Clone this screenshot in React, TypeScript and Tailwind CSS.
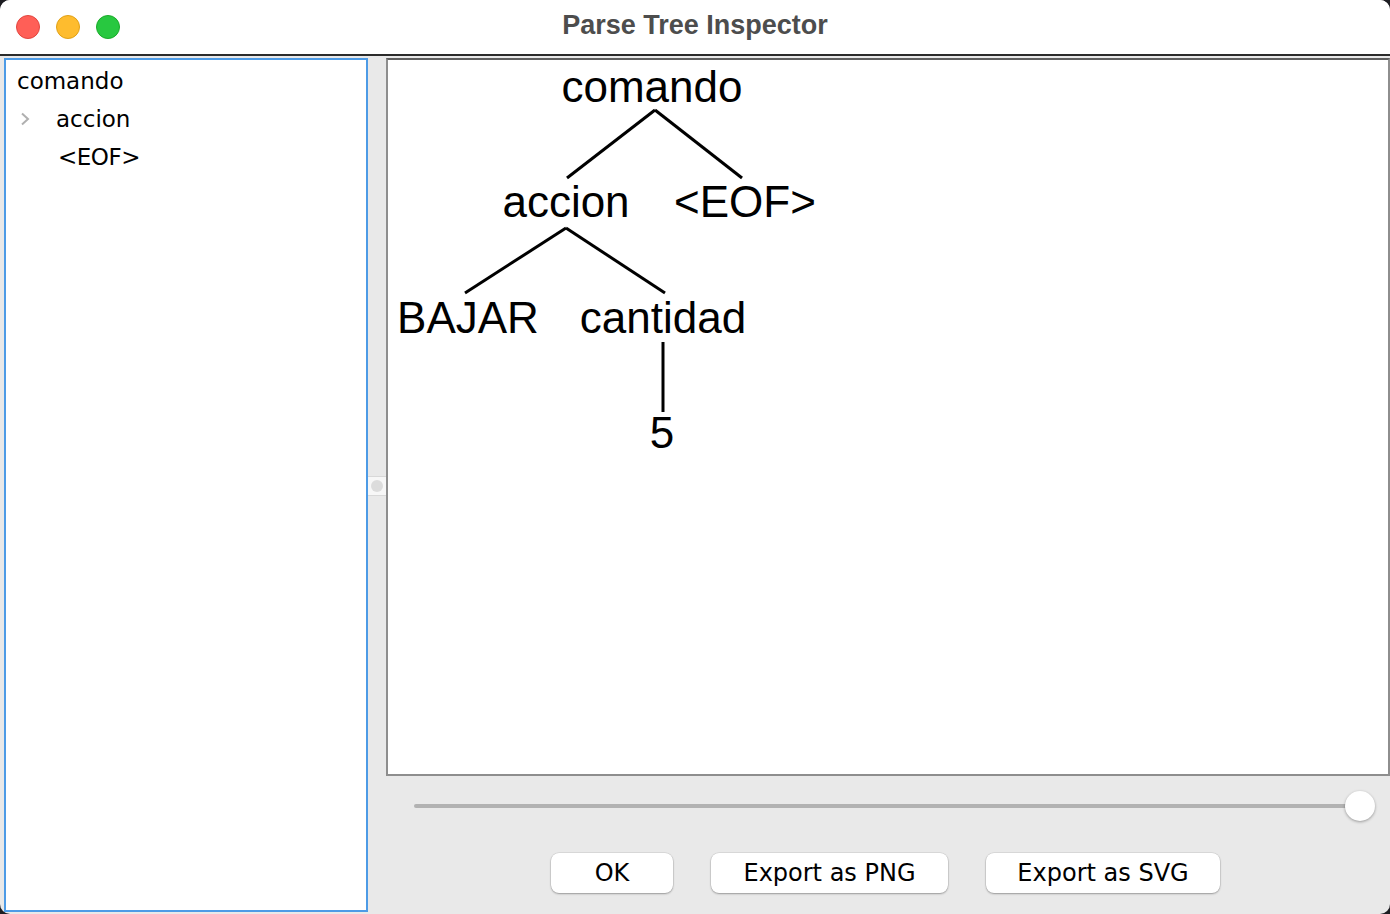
import { useState } from 'react';

const treeFont = '"Liberation Sans", Arial, sans-serif';
const uiFont = '"DejaVu Sans", "Lucida Grande", sans-serif';

function TrafficLights() {
  return (
    <div className="flex items-center gap-[16px] pl-[16px]">
      <span className="w-[24px] h-[24px] rounded-full bg-[#ff5f57] border border-[#e2463f]" />
      <span className="w-[24px] h-[24px] rounded-full bg-[#febc2e] border border-[#e1a116]" />
      <span className="w-[24px] h-[24px] rounded-full bg-[#28c840] border border-[#1aab29]" />
    </div>
  );
}

function TreeList() {
  return (
    <div
      className="w-[364px] h-[854px] border-2 border-[#4d9be6] bg-white text-[23px] text-black"
      style={{ fontFamily: uiFont }}
    >
      <div className="pt-[2px]">
        <div className="h-[38px] flex items-center pl-[11px]">comando</div>
        <div className="h-[38px] flex items-center">
          <svg width="10" height="14" viewBox="0 0 10 14" className="ml-[14px] mr-[26px]">
            <path d="M2 1.5 L8 7 L2 12.5" fill="none" stroke="#b0b0b0" strokeWidth="2" />
          </svg>
          <span>accion</span>
        </div>
        <div className="h-[38px] flex items-center pl-[52px] tracking-[-0.5px]">&lt;EOF&gt;</div>
      </div>
    </div>
  );
}

function ParseTree() {
  const nodes = [
    { label: 'comando', x: 264, y: 42 },
    { label: 'accion', x: 178, y: 157 },
    { label: '<EOF>', x: 357, y: 157 },
    { label: 'BAJAR', x: 80, y: 273 },
    { label: 'cantidad', x: 275, y: 273 },
    { label: '5', x: 274, y: 388 },
  ];
  const edges = [
    [267, 50, 179, 118],
    [267, 50, 354, 118],
    [178, 168, 77, 233],
    [178, 168, 277, 233],
    [275, 282, 275, 352],
  ];

  return (
    <svg width="1000" height="714" className="block">
      {edges.map(([x1, y1, x2, y2], i) => (
        <line key={i} x1={x1} y1={y1} x2={x2} y2={y2} stroke="#000" strokeWidth="3" />
      ))}
      {nodes.map((n) => (
        <text
          key={n.label}
          x={n.x}
          y={n.y}
          textAnchor="middle"
          fontSize="44"
          fill="#000"
          style={{ fontFamily: treeFont }}
        >
          {n.label}
        </text>
      ))}
    </svg>
  );
}

function Button({ label, width }: { label: string; width: string }) {
  return (
    <button
      className={`${width} h-[40px] rounded-[8px] bg-white text-[24px] text-black shadow-[0_1px_2px_rgba(0,0,0,0.3),0_0_0_0.5px_rgba(0,0,0,0.12)] flex items-center justify-center`}
      style={{ fontFamily: uiFont }}
    >
      {label}
    </button>
  );
}

export default function App() {
  const [zoom] = useState(100);

  return (
    <div className="w-[1390px] h-[914px] bg-[#1d1d22]">
      <div className="w-full h-full rounded-[10px] overflow-hidden flex flex-col bg-[#e9e9e9]">
        <div className="h-[56px] bg-white border-b-2 border-[#2b2b2b] grid grid-cols-[1fr_auto_1fr] items-center">
          <TrafficLights />
          <div
            className="text-[27px] font-bold text-[#4d4d4d] pb-[4px]"
            style={{ fontFamily: '"Liberation Sans", Arial, sans-serif' }}
          >
            Parse Tree Inspector
          </div>
          <div />
        </div>

        <div className="flex-1 flex pt-[2px] pl-[4px]">
          <TreeList />

          <div className="w-[18px] flex items-center justify-center">
            <div className="w-[18px] h-[20px] bg-[#f7f7f7] border-y border-[#d8d8d8] flex items-center justify-center">
              <span className="w-[12px] h-[12px] rounded-full bg-[#dcdcdc]" />
            </div>
          </div>

          <div className="flex-1 flex flex-col">
            <div className="h-[718px] border-2 border-[#8e8e8e] border-t-[#5f5f5f] bg-white overflow-hidden">
              <ParseTree />
            </div>

            <div className="h-[30px] mt-[15px] flex items-center pl-[28px] pr-[15px]">
              <div className="flex-1 h-[4px] bg-[#b2b2b2] rounded-full" />
              <div
                className="w-[30px] h-[30px] -ml-[2px] rounded-full bg-white shadow-[0_1px_3px_rgba(0,0,0,0.35)]"
                title={`${zoom}`}
              />
            </div>

            <div className="mt-[32px] flex justify-center gap-[38px] pr-[5px]">
              <Button label="OK" width="w-[122px]" />
              <Button label="Export as PNG" width="w-[237px]" />
              <Button label="Export as SVG" width="w-[234px]" />
            </div>
          </div>
        </div>
      </div>
    </div>
  );
}
